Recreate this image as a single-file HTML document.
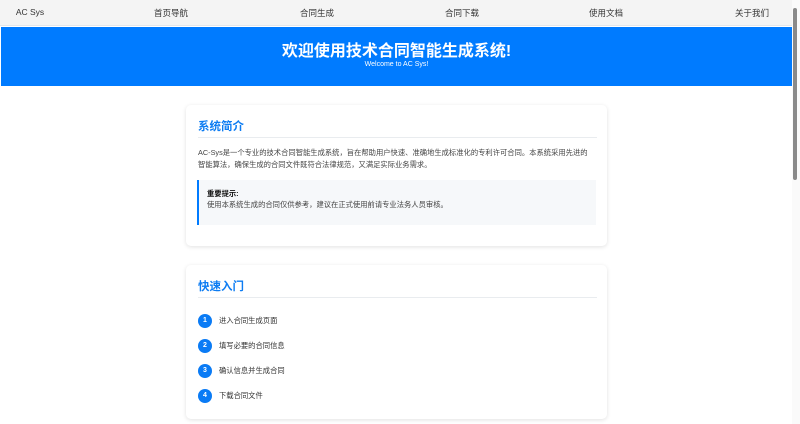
<!DOCTYPE html>
<html><head><meta charset="utf-8"><style>
*{margin:0;padding:0;box-sizing:border-box}
body{width:800px;height:424px;overflow:hidden;background:#fff;font-family:"Liberation Sans","Noto Sans CJK SC",sans-serif;position:relative}
.nav{position:absolute;left:0;top:0;width:792px;height:26px;background:#f4f4f4;border-bottom:1px solid #e2e6ea}
.nav span{position:absolute;top:7px;font-size:8.5px;color:#333;transform:translateX(-50%)}
.banner{position:absolute;left:1px;top:27px;width:791px;height:59px;background:#007bff;color:#fff;text-align:center}
.banner h1{font-size:16px;font-weight:bold;margin-top:15px;line-height:20px}
.banner p{font-size:7px;margin-top:-1px}
.card{position:absolute;left:186px;width:421px;background:#fff;border-radius:5px;box-shadow:0 1px 4px rgba(0,0,0,.12)}
.card h2{position:absolute;left:12px;top:13px;font-size:11.5px;color:#0d7cf2;font-weight:bold}
.card .hr{position:absolute;left:12px;right:10px;top:32px;height:1px;background:#e9ecef}
.txt{position:absolute;left:12px;top:42px;width:392px;font-size:7.3px;line-height:12px;color:#444}
.note{position:absolute;left:11px;top:75px;width:399px;height:45px;background:#f6f8fa;border-left:2px solid #007bff;padding:8px 0 0 8px;font-size:7.3px;line-height:11px;color:#444}
.note b{color:#111}
.step{position:absolute;left:12px;height:14px;font-size:7.3px;color:#333;line-height:14px}
.step i{position:absolute;left:0;top:0;width:14px;height:14px;border-radius:50%;background:#0a7bf5;color:#fff;font-style:normal;font-weight:bold;font-size:7px;text-align:center;line-height:14px}
.step span{position:absolute;left:21px;white-space:nowrap}
.sb{position:absolute;left:792px;top:0;width:8px;height:424px;background:#fafafa}
.sb div{position:absolute;left:1px;top:8px;width:4px;height:172px;background:#8a8a8a;border-radius:2px}
</style></head><body>
<div class="nav">
<span style="left:30px">AC Sys</span>
<span style="left:171px">首页导航</span>
<span style="left:317px">合同生成</span>
<span style="left:462px">合同下载</span>
<span style="left:606px">使用文档</span>
<span style="left:752px">关于我们</span>
</div>
<div class="banner"><h1>欢迎使用技术合同智能生成系统!</h1><p>Welcome to AC Sys!</p></div>
<div class="card" style="top:105px;height:141px">
<h2>系统简介</h2><div class="hr"></div>
<div class="txt">AC-Sys是一个专业的技术合同智能生成系统，旨在帮助用户快速、准确地生成标准化的专利许可合同。本系统采用先进的智能算法，确保生成的合同文件既符合法律规范，又满足实际业务需求。</div>
<div class="note"><b>重要提示:</b><br>使用本系统生成的合同仅供参考，建议在正式使用前请专业法务人员审核。</div>
</div>
<div class="card" style="top:265px;height:154px">
<h2>快速入门</h2><div class="hr"></div>
<div class="step" style="top:49px"><i>1</i><span>进入合同生成页面</span></div>
<div class="step" style="top:74px"><i>2</i><span>填写必要的合同信息</span></div>
<div class="step" style="top:99px"><i>3</i><span>确认信息并生成合同</span></div>
<div class="step" style="top:124px"><i>4</i><span>下载合同文件</span></div>
</div>
<div class="sb"><div></div></div>
</body></html>
